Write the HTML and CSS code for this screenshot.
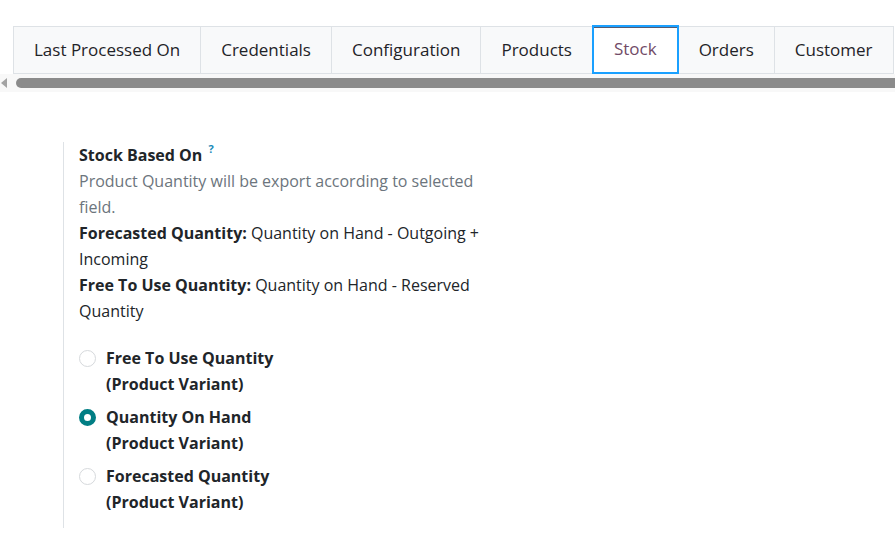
FILE: index.html
```html
<!DOCTYPE html>
<html lang="en">
<head>
<meta charset="utf-8">
<title>Stock</title>
<link rel="stylesheet" href="styles.css">
</head>
<body>
<div class="tabbar">
  <ul class="tabs">
    <li class="tab">Last Processed On</li>
    <li class="tab">Credentials</li>
    <li class="tab">Configuration</li>
    <li class="tab">Products</li>
    <li class="tab active">Stock</li>
    <li class="tab">Orders</li>
    <li class="tab">Customer</li>
  </ul>
  <div class="scrollbar">
    <span class="arrow"></span>
    <span class="thumb"></span>
  </div>
</div>
<div class="content">
  <div class="group">
    <div class="label">Stock Based On <sup class="help">?</sup></div>
    <div class="desc">
      <div class="muted">Product Quantity will be export according to selected field.</div>
      <div><b>Forecasted Quantity:</b> Quantity on Hand - Outgoing + Incoming</div>
      <div><b>Free To Use Quantity:</b> Quantity on Hand - Reserved Quantity</div>
    </div>
    <div class="radios">
      <label class="radio"><span class="dot"></span><span class="rtext">Free To Use Quantity<br>(Product Variant)</span></label>
      <label class="radio"><span class="dot checked"></span><span class="rtext">Quantity On Hand<br>(Product Variant)</span></label>
      <label class="radio"><span class="dot"></span><span class="rtext">Forecasted Quantity<br>(Product Variant)</span></label>
    </div>
  </div>
</div>
</body>
</html>
```
FILE: styles.css
```css
html, body {
  margin: 0;
  padding: 0;
  background: #ffffff;
}
body {
  font-family: "Open Sans", "Noto Sans", sans-serif;
  font-size: 16px;
  color: #212529;
  overflow: hidden;
  width: 895px;
  height: 555px;
}
.tabbar {
  padding-top: 26px;
  overflow: hidden;
}
.tabs {
  display: flex;
  list-style: none;
  margin: 0 0 0 13px;
  padding: 0;
  white-space: nowrap;
}
.tab {
  flex: none;
  height: 46px;
  line-height: 45px;
  padding: 0 20px;
  background: #f8f9fa;
  border: 1px solid #dee2e6;
  border-left: none;
  font-size: 17px;
  color: #1f2328;
}
.tab:first-child {
  border-left: 1px solid #dee2e6;
}
.tab.active {
  background: #ffffff;
  color: #714b67;
  border: 2px solid #1aa0ff;
  box-shadow: inset 0 1px 0 #555a70;
  height: 45px;
  line-height: 44px;
  margin-top: -1px;
  margin-left: -1px;
  padding: 0 20px;
}
.scrollbar {
  display: flex;
  align-items: center;
  height: 18px;
  background: #f8f8f8;
}
.arrow {
  width: 0;
  height: 0;
  margin-left: 1px;
  border-top: 5px solid transparent;
  border-bottom: 5px solid transparent;
  border-right: 6px solid #a3a3a3;
}
.thumb {
  flex: 1;
  height: 10px;
  margin-left: 9px;
  margin-right: -10px;
  background: #8b8b8b;
  border-radius: 5px 0 0 5px;
}
.content {
  padding: 50px 0 0 63px;
}
.group {
  border-left: 1px solid #dee2e6;
  padding: 0 0 13px 15px;
  width: 428px;
  line-height: 26px;
}
.label {
  font-weight: 700;
}
.help {
  color: #1b8ab8;
  font-size: 11px;
  font-weight: 700;
  vertical-align: 8px;
  line-height: 0;
  margin-left: 2px;
}
.muted {
  color: #6c757d;
}
.radios {
  margin-top: 21px;
  display: flex;
  flex-direction: column;
  gap: 7px;
}
.radio {
  display: flex;
  align-items: flex-start;
  font-weight: 700;
}
.dot {
  flex: none;
  box-sizing: border-box;
  width: 17px;
  height: 17px;
  margin: 5px 10px 0 0;
  border: 1px solid #d6d9dc;
  border-radius: 50%;
  background: #ffffff;
}
.dot.checked {
  border: 5px solid #017e84;
  background: #ffffff;
}
```
